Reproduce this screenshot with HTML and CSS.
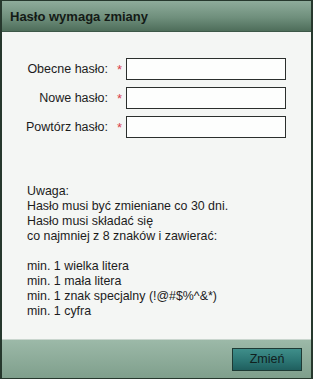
FILE: index.html
```html
<!DOCTYPE html>
<html lang="pl">
<head>
    <meta charset="UTF-8">
    <title>Hasło wymaga zmiany</title>
    <link rel="stylesheet" href="styles.css">
</head>
<body>
    <div class="dialog">
        <div class="header">
            <span class="title">Hasło wymaga zmiany</span>
        </div>
        <div class="content">
            <form class="fields">
                <label class="label" for="old">Obecne hasło:</label>
                <span class="required">*</span>
                <input class="input" type="password" id="old">

                <label class="label" for="new">Nowe hasło:</label>
                <span class="required">*</span>
                <input class="input" type="password" id="new">

                <label class="label" for="repeat">Powtórz hasło:</label>
                <span class="required">*</span>
                <input class="input" type="password" id="repeat">
            </form>
            <div class="notes">
                <p>Uwaga:<br>
                Hasło musi być zmieniane co 30 dni.<br>
                Hasło musi składać się<br>
                co najmniej z 8 znaków i zawierać:</p>
                <p>min. 1 wielka litera<br>
                min. 1 mała litera<br>
                min. 1 znak specjalny (!@#$%^&amp;*)<br>
                min. 1 cyfra</p>
            </div>
        </div>
        <div class="footer">
            <button class="button" type="button">Zmień</button>
        </div>
    </div>
</body>
</html>
```

FILE: styles.css
```css
*{
    box-sizing: border-box;
}

body{
    margin: 0;
    width: 313px;
    height: 379px;
    font-family: 'Liberation Sans', Arial, sans-serif;
    font-size: 12px;
    color: #1c1c1c;
}

.dialog{
    display: flex;
    flex-direction: column;
    width: 313px;
    height: 379px;
    border: 1px solid #26382d;
    border-left-width: 2px;
    border-right-width: 2px;
    background: #f4f6f4;
}

.header{
    display: flex;
    align-items: center;
    height: 31px;
    padding-left: 8px;
    background: linear-gradient(#8eac9b, #6f8f7c 55%, #4e6d5a);
    border-bottom: 1px solid #3d5848;
}

.title{
    font-weight: bold;
    font-size: 13px;
    color: #141a16;
}

.content{
    flex: 1;
    padding-top: 26px;
}

.fields{
    display: grid;
    grid-template-columns: 106px 18px 160px;
    row-gap: 7px;
    align-items: center;
    margin: 0;
}

.label{
    text-align: right;
    font-size: 12.5px;
    color: #1c1c1c;
}

.required{
    color: #d8404c;
    font-size: 13px;
    text-align: center;
    padding-left: 5px;
}

.input{
    height: 22px;
    border: 1px solid #2b2f2d;
    background: #fdfefd;
    margin: 0;
    padding: 0 3px;
}

.notes{
    margin-top: 46px;
    padding-left: 25px;
    line-height: 15px;
    font-size: 12.4px;
}

.notes p{
    margin: 0 0 15px;
}

.footer{
    display: flex;
    justify-content: flex-end;
    align-items: center;
    height: 39px;
    padding-right: 9px;
    background: linear-gradient(#9cb9a8, #7f9f8c);
    border-top: 1px solid #c9d6ce;
}

.button{
    width: 70px;
    height: 23px;
    border: 1px solid #1e3a34;
    background: linear-gradient(#3f8e8a, #2b7472 60%, #1f5f5e);
    font-family: 'Liberation Sans', Arial, sans-serif;
    font-size: 12.5px;
    color: #10201e;
    padding: 0;
}
```
